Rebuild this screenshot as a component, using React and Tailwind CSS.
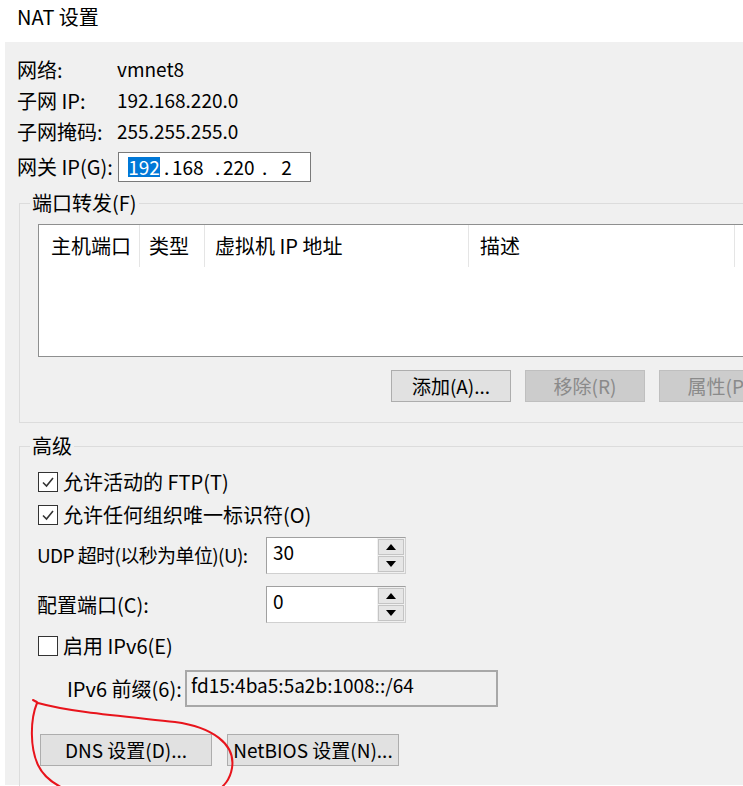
import React from 'react';

const font = "font-['Noto_Sans_CJK_SC','Noto_Sans',sans-serif]";

const Check = ({ checked }) => (
  <span className="w-[20px] h-[20px] border border-[#333333] bg-white flex items-center justify-center shrink-0">
    {checked && (
      <svg width="14" height="14" viewBox="0 0 14 14">
        <path d="M2 7.5 L5.5 11 L12 3" fill="none" stroke="#333" strokeWidth="1.6" />
      </svg>
    )}
  </span>
);

const Spinner = ({ value }) => (
  <div className="w-[140px] h-[37px] shrink-0 flex border border-[#a0a0a0] border-r-[#d0d0d0] border-b-[#d0d0d0] bg-[#f0f0f0]">
    <div className="flex-1 bg-white pl-[6px] pt-[2px] leading-[24px] text-[19px]">{value}</div>
    <div className="w-[28px] flex flex-col gap-[1px] p-[1px]">
      <button className="flex-1 border border-[#c4c4c4] bg-[#e6e6e6] flex items-center justify-center">
        <svg width="10" height="6" viewBox="0 0 10 6"><path d="M0 6 L5 0 L10 6 Z" fill="#000" /></svg>
      </button>
      <button className="flex-1 border border-[#c4c4c4] bg-[#e6e6e6] flex items-center justify-center">
        <svg width="10" height="6" viewBox="0 0 10 6"><path d="M0 0 L10 0 L5 6 Z" fill="#000" /></svg>
      </button>
    </div>
  </div>
);

const Btn = ({ children, disabled, w = 'w-[120px]' }) => (
  <button
    className={
      disabled
        ? `${w} h-[32px] shrink-0 border border-[#bfbfbf] bg-[#cccccc] text-[#8a8a8a] text-[19px] leading-[24px] whitespace-nowrap`
        : `${w} h-[32px] shrink-0 border border-[#adadad] bg-[#e1e1e1] text-black text-[19px] leading-[24px] whitespace-nowrap`
    }
  >
    {children}
  </button>
);

export default function App() {
  return (
    <div className={`relative w-[743px] h-[786px] bg-white overflow-hidden text-black ${font}`}>
      <div className="h-[42px] pl-[17px] pt-[5px] text-[20px] leading-[24px]">NAT 设置</div>

      <div className="ml-[5px] h-[743px] bg-[#f0f0f0] pl-[12px] pt-[12px] text-[20px]">
        <div className="flex items-center h-[31px]">
          <span className="w-[100px]">网络:</span>
          <span className="text-[19px]">vmnet8</span>
        </div>
        <div className="flex items-center h-[31px]">
          <span className="w-[100px]">子网 IP:</span>
          <span className="text-[19px]">192.168.220.0</span>
        </div>
        <div className="flex items-center h-[31px]">
          <span className="w-[100px]">子网掩码:</span>
          <span className="text-[19px]">255.255.255.0</span>
        </div>
        <div className="flex items-center h-[30px] mt-[5px]">
          <span className="w-[101px]">网关 IP(G):</span>
          <div className="w-[193px] h-[30px] border border-[#7a7a7a] bg-white flex items-center pl-[9px] text-[19px] leading-[20px]">
            <span className="bg-[#0078d7] text-white w-[32px] text-center">192</span>
            <span className="ml-[4px] w-[8px]">.</span>
            <span className="w-[40px]">168</span>
            <span className="ml-[3px] w-[8px]">.</span>
            <span className="w-[34px]">220</span>
            <span className="ml-[5px]">.</span>
            <span className="ml-[14px]">2</span>
          </div>
        </div>

        <fieldset className="mt-[10px] ml-[2px] w-[790px] border border-[#dcdcdc] pl-[18px] pt-[10px] pb-[20px]">
          <legend className="-ml-[8px] px-[2px] leading-[22px]">端口转发(F)</legend>
          <div className="w-[760px] h-[133px] border border-[#8e8f8f] bg-white">
            <div className="flex h-[42px] items-center">
              <div className="w-[101px] h-full border-r border-[#e5e5e5] pl-[12px] flex items-center">主机端口</div>
              <div className="w-[65px] h-full border-r border-[#e5e5e5] pl-[9px] flex items-center">类型</div>
              <div className="w-[264px] h-full border-r border-[#e5e5e5] pl-[10px] flex items-center">虚拟机 IP 地址</div>
              <div className="w-[266px] h-full border-r border-[#e5e5e5] pl-[11px] flex items-center">描述</div>
            </div>
          </div>
          <div className="flex gap-[14px] mt-[13px] pl-[353px]">
            <Btn>添加(A)...</Btn>
            <Btn disabled>移除(R)</Btn>
            <Btn disabled>属性(P)</Btn>
          </div>
        </fieldset>

        <fieldset className="mt-[12px] ml-[2px] w-[790px] h-[400px] border border-[#dcdcdc] pl-[18px] pt-[8px]">
          <legend className="-ml-[8px] px-[2px] leading-[22px]">高级</legend>
          <div className="flex items-center gap-[5px] h-[33px]">
            <Check checked />
            <span>允许活动的 FTP(T)</span>
          </div>
          <div className="flex items-center gap-[5px] h-[33px]">
            <Check checked />
            <span>允许任何组织唯一标识符(O)</span>
          </div>
          <div className="flex items-center h-[37px] mt-[6px] -ml-[1px]">
            <span className="w-[229px] shrink-0 whitespace-nowrap text-[19px] tracking-[-0.6px]">UDP 超时(以秒为单位)(U):</span>
            <Spinner value="30" />
          </div>
          <div className="flex items-center h-[37px] mt-[12px] -ml-[1px]">
            <span className="w-[229px] shrink-0">配置端口(C):</span>
            <Spinner value="0" />
          </div>
          <div className="flex items-center gap-[5px] h-[30px] mt-[8px]">
            <Check />
            <span>启用 IPv6(E)</span>
          </div>
          <div className="flex items-center h-[37px] mt-[9px] pl-[29px]">
            <span className="w-[118px] shrink-0 whitespace-nowrap">IPv6 前缀(6):</span>
            <div className="w-[313px] h-[37px] border-2 border-[#a8a8a8] bg-[#f0f0f0] pl-[4px] pt-[1px] text-[19px] leading-[24px]">
              fd15:4ba5:5a2b:1008::/64
            </div>
          </div>
          <div className="flex gap-[15px] mt-[27px] pl-[2px]">
            <Btn w="w-[172px]">DNS 设置(D)...</Btn>
            <Btn w="w-[172px]">NetBIOS 设置(N)...</Btn>
          </div>
        </fieldset>
      </div>

      <svg className="absolute inset-0 pointer-events-none" width="743" height="786" viewBox="0 0 743 786">
        <path
          d="M33 700 C 35 701, 37 702, 38 703 C 70 712, 120 716, 175 722 C 212 727, 236 744, 232 768 C 230 780, 224 786, 216 792 M37 703 C 30 720, 30 748, 38 765 C 44 778, 56 786, 72 792"
          fill="none"
          stroke="#e8141c"
          strokeWidth="2"
          strokeLinecap="round"
        />
      </svg>
    </div>
  );
}
